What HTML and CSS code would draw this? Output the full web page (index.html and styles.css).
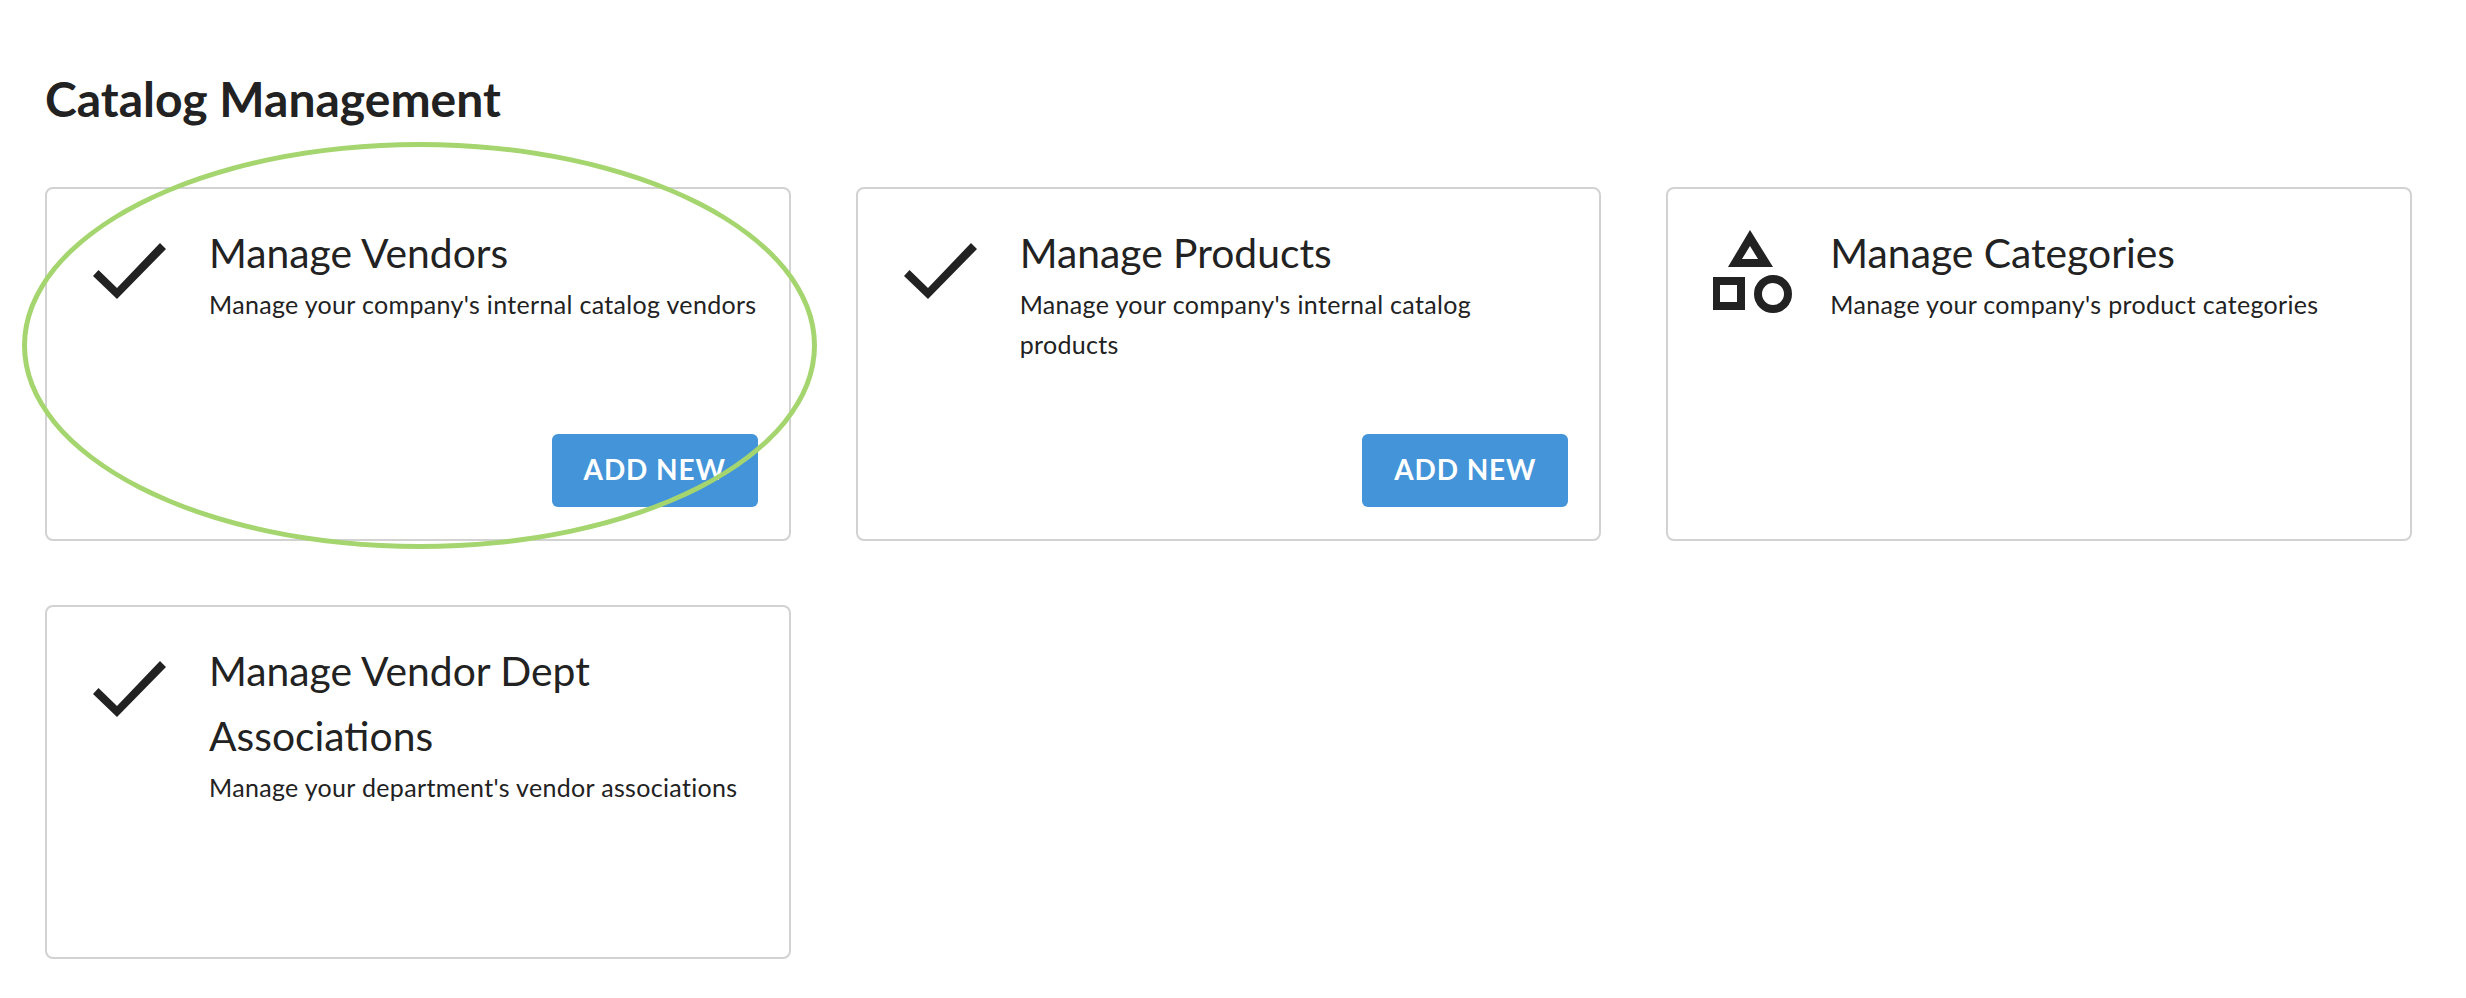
FILE: index.html
```html
<!DOCTYPE html>
<html lang="en">
<head>
<meta charset="UTF-8">
<meta name="viewport" content="width=device-width, initial-scale=1.0">
<title>Catalog Management</title>
<link rel="stylesheet" href="styles.css">
</head>
<body>
<h2 class="page-title">Catalog Management</h2>
<div class="card-grid">
    <div class="card">
        <svg class="card-icon" viewBox="0 0 80 84"><polygon points="1,46 6.5,40 25,58 68,13 74,19 25,69"/></svg>
        <div class="card-body">
            <h3>Manage Vendors</h3>
            <p>Manage your company's internal catalog vendors</p>
            <button class="add-btn">ADD NEW</button>
        </div>
        <div class="highlight"></div>
    </div>
    <div class="card">
        <svg class="card-icon" viewBox="0 0 80 84"><polygon points="1,46 6.5,40 25,58 68,13 74,19 25,69"/></svg>
        <div class="card-body">
            <h3>Manage Products</h3>
            <p>Manage your company's internal catalog products</p>
            <button class="add-btn">ADD NEW</button>
        </div>
    </div>
    <div class="card">
        <svg class="card-icon" viewBox="0 0 80 84">
            <path fill-rule="evenodd" d="M37 0L60 37H15ZM37 16L29 29H45Z"/>
            <rect class="outline" x="3" y="51" width="25" height="25"/>
            <circle class="outline" cx="60" cy="64" r="15"/>
        </svg>
        <div class="card-body">
            <h3>Manage Categories</h3>
            <p>Manage your company's product categories</p>
        </div>
    </div>
    <div class="card">
        <svg class="card-icon" viewBox="0 0 80 84"><polygon points="1,46 6.5,40 25,58 68,13 74,19 25,69"/></svg>
        <div class="card-body">
            <h3>Manage Vendor Dept Associations</h3>
            <p>Manage your department's vendor associations</p>
        </div>
    </div>
</div>
</body>
</html>
```

FILE: styles.css
```css
body {
    font-family: Lato, "Open Sans", sans-serif;
    margin: 0;
    padding: 0 54px 38px 45px;
    background-color: #fff;
    color: #222;
}
.page-title {
    margin: 0;
    padding-top: 69px;
    height: 187px;
    box-sizing: border-box;
    font-size: 48px;
    line-height: 60px;
    font-weight: 700;
}
.card-grid {
    display: grid;
    grid-template-columns: repeat(3, 1fr);
    gap: 64px 65px;
}
.card {
    position: relative;
    display: flex;
    box-sizing: border-box;
    height: 354px;
    padding: 31px 31px 32px 32px;
    border: 2px solid #d2d2d2;
    border-radius: 8px;
}
.card-icon {
    flex: none;
    width: 80px;
    height: 84px;
    margin: 10px 37px 0 13px;
    fill: #222;
}
.card-icon .outline {
    fill: none;
    stroke: #222;
    stroke-width: 8;
}
.card-body {
    flex: 1;
    display: flex;
    flex-direction: column;
}
.card-body h3 {
    margin: 0;
    font-size: 40.8px;
    line-height: 65px;
    font-weight: 400;
}
.card-body p {
    margin: -1px 0 0;
    font-size: 25px;
    line-height: 40px;
    letter-spacing: 0.33px;
}
.add-btn {
    align-self: flex-end;
    margin-top: auto;
    width: 206px;
    height: 73px;
    padding: 0 0 3px;
    border: none;
    border-radius: 6px;
    background-color: #4394d8;
    color: #fff;
    font-family: inherit;
    font-size: 28px;
    font-weight: 700;
    letter-spacing: 0.9px;
}
.highlight {
    position: absolute;
    left: -25px;
    top: -47px;
    width: 795px;
    height: 407px;
    box-sizing: border-box;
    border: 5px solid #a5d56f;
    border-radius: 50%;
}
```
